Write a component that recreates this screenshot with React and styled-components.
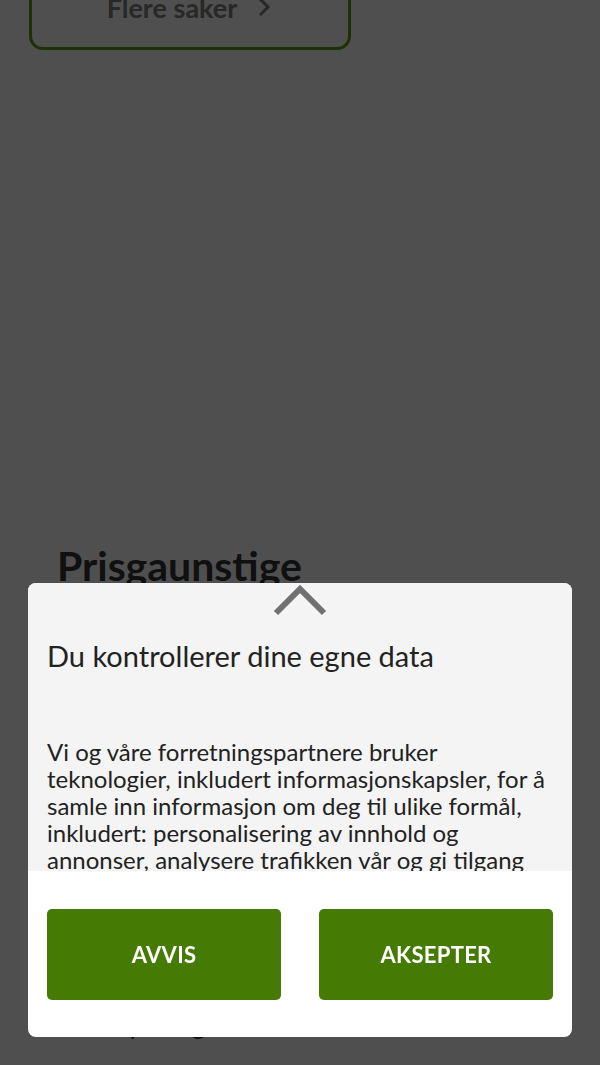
import styled, { createGlobalStyle } from 'styled-components';

const GlobalStyle = createGlobalStyle`
  html, body {
    margin: 0;
    padding: 0;
    height: 100%;
    overflow: hidden;
    background: #ffffff;
    font-family: Lato, "Noto Sans", sans-serif;
  }
`;

function ChevronRight() {
  return (
    <svg width="14" height="20" viewBox="0 0 14 20" fill="none">
      <polyline points="3,2 11,10 3,18" stroke="currentColor" strokeWidth="3" />
    </svg>
  );
}

function ChevronUp() {
  return (
    <svg width="56" height="34" viewBox="0 0 56 34" fill="none">
      <polyline points="4,30 28,6 52,30" stroke="#717171" strokeWidth="6" strokeLinejoin="miter" />
    </svg>
  );
}

export default function App() {
  return (
    <>
      <GlobalStyle />
      <Page>
        <MoreButton type="button">
          Flere saker
          <ChevronRight />
        </MoreButton>

        <Section>
          <SectionTitle>Prisgaunstige</SectionTitle>
          <SectionText>Finn nye ting her</SectionText>
        </Section>
      </Page>

      <Overlay />

      <Consent role="dialog" aria-label="Du kontrollerer dine egne data">
        <ConsentBody>
          <Toggle type="button" aria-label="Vis mer">
            <ChevronUp />
          </Toggle>
          <ConsentTitle>Du kontrollerer dine egne data</ConsentTitle>
          <ConsentText>
            Vi og våre forretningspartnere bruker teknologier, inkludert informasjonskapsler, for å
            samle inn informasjon om deg til ulike formål, inkludert: personalisering av innhold og
            annonser, analysere trafikken vår og gi tilgang til funksjoner i sosiale medier.
          </ConsentText>
        </ConsentBody>
        <ConsentActions>
          <ActionButton type="button">AVVIS</ActionButton>
          <ActionButton type="button">AKSEPTER</ActionButton>
        </ConsentActions>
      </Consent>
    </>
  );
}

const Page = styled.main`
  margin-top: -36px;
  padding: 0 28px;
`;

const MoreButton = styled.button`
  display: flex;
  align-items: center;
  justify-content: center;
  gap: 20px;
  width: 322px;
  height: 86px;
  margin-left: 1px;
  border: 3px solid #5f9f08;
  border-radius: 14px;
  background: #ffffff;
  color: #808080;
  font-family: Lato, sans-serif;
  font-size: 27px;
  font-weight: 700;
  padding: 0 2px 0 0;
`;

const Section = styled.section`
  margin-top: 491px;
  padding: 0 29px;
`;

const SectionTitle = styled.h2`
  margin: 0;
  font-size: 41px;
  line-height: 50px;
  font-weight: 700;
  color: #363636;
`;

const SectionText = styled.p`
  margin: 418px 0 0;
  font-size: 26px;
  line-height: 30px;
  color: #363636;
`;

const Overlay = styled.div`
  position: fixed;
  inset: 0;
  background: rgba(0, 0, 0, 0.69);
`;

const Consent = styled.div`
  position: fixed;
  top: 583px;
  left: 28px;
  right: 28px;
  bottom: 28px;
  display: flex;
  flex-direction: column;
  border-radius: 8px;
  overflow: hidden;
  background: #ffffff;
`;

const ConsentBody = styled.div`
  flex: 1;
  min-height: 0;
  overflow: hidden;
  background: #f4f4f4;
  padding: 0 19px;
  color: #222222;
`;

const Toggle = styled.button`
  display: block;
  margin: 0 auto;
  padding: 0;
  border: 0;
  background: none;
  line-height: 0;
`;

const ConsentTitle = styled.h2`
  margin: 21px 0 0;
  font-size: 29px;
  line-height: 35px;
  font-weight: 400;
`;

const ConsentText = styled.p`
  margin: 65px 0 0;
  padding-right: 6px;
  font-size: 24px;
  line-height: 27px;
`;

const ConsentActions = styled.div`
  flex: none;
  height: 166px;
  display: grid;
  grid-template-columns: 1fr 1fr;
  gap: 38px;
  align-items: center;
  padding: 0 19px;
  box-sizing: border-box;
`;

const ActionButton = styled.button`
  height: 91px;
  border: 0;
  border-radius: 5px;
  background: #457a04;
  color: #ffffff;
  font-family: Lato, sans-serif;
  font-size: 22px;
  font-weight: 700;
  letter-spacing: 0.3px;
`;
